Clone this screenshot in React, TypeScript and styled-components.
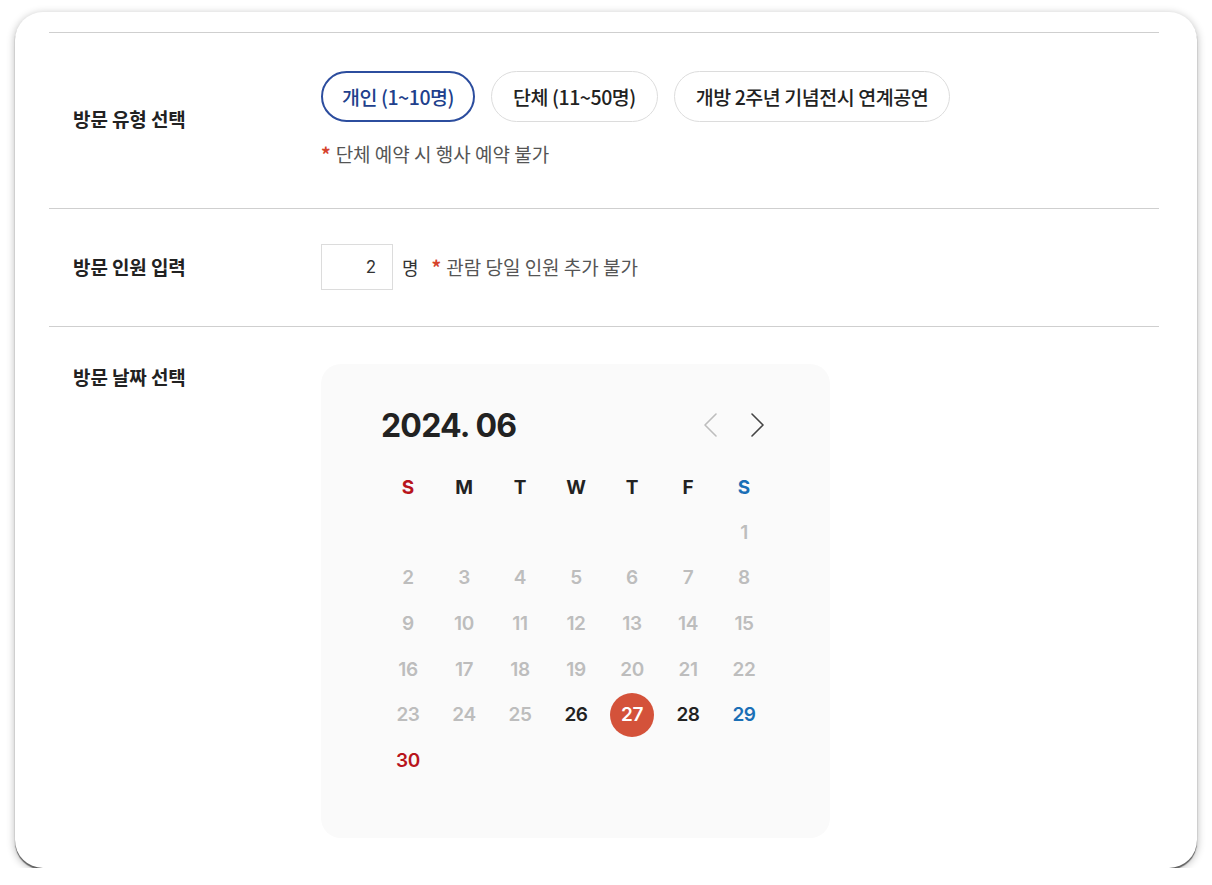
import styled, { createGlobalStyle } from "styled-components";

const GlobalStyle = createGlobalStyle`
  body {
    margin: 0;
    background: #ffffff;
    font-family: "Noto Sans CJK KR", "Noto Sans", sans-serif;
    color: #222;
  }
`;

const Frame = styled.div`
  box-sizing: border-box;
  width: 1182px;
  height: 856px;
  margin: 12px 0 0 15px;
  padding: 20px 38px 0 34px;
  background: #fff;
  border-radius: 28px;
  overflow: hidden;
  box-shadow: 0 2px 1px rgba(0, 0, 0, 0.55), 0 2px 8px rgba(0, 0, 0, 0.3);
`;

const Form = styled.div`
  border-top: 1px solid #cfcfcf;
`;

const Row = styled.div<{ $align?: string; $pad: string; $last?: boolean }>`
  display: flex;
  align-items: ${({ $align }) => $align || "center"};
  padding: ${({ $pad }) => $pad};
  border-bottom: ${({ $last }) => ($last ? "none" : "1px solid #cfcfcf")};
`;

const Label = styled.div<{ $offset?: number }>`
  width: 248px;
  flex-shrink: 0;
  padding-top: ${({ $offset }) => $offset || 0}px;
  font-size: 19px;
  line-height: 24px;
  font-weight: 700;
  letter-spacing: -0.1px;
  color: #222;
`;

const Field = styled.div`
  display: flex;
  flex-direction: column;
`;

const TypeGroup = styled.div`
  display: flex;
  gap: 16px;
`;

const TypeButton = styled.button<{ $active?: boolean }>`
  box-sizing: border-box;
  height: 51px;
  padding: 0 ${({ $active }) => ($active ? 19 : 21)}px;
  border-radius: 26px;
  background: #fff;
  border: ${({ $active }) => ($active ? "2px solid #2c4d9e" : "1px solid #dcdcdc")};
  color: ${({ $active }) => ($active ? "#213f8c" : "#222")};
  font-family: inherit;
  font-size: 19.5px;
  font-weight: 500;
  letter-spacing: -0.45px;
  cursor: pointer;
`;

const Note = styled.p<{ $top?: number }>`
  margin: ${({ $top }) => $top || 0}px 0 0;
  font-size: 19px;
  line-height: 24px;
  color: #555;

  &::before {
    content: "*";
    color: #d6432c;
    font-weight: 700;
    margin-right: 5px;
  }
`;

const CountLine = styled.div`
  display: flex;
  align-items: center;
`;

const CountInput = styled.input`
  box-sizing: border-box;
  width: 72px;
  height: 46px;
  padding: 0 16px;
  border: 1px solid #dcdcdc;
  text-align: right;
  font-family: "Inter", sans-serif;
  font-size: 17px;
  color: #333;
  outline: none;
`;

const Unit = styled.span`
  margin: 0 13px 0 9px;
  font-size: 18px;
  color: #333;
`;

const Calendar = styled.div`
  box-sizing: border-box;
  width: 509px;
  height: 474px;
  padding: 39px 59px 54px;
  background: #fafafa;
  border-radius: 20px;
  font-family: "Inter", sans-serif;
`;

const CalHeader = styled.div`
  display: flex;
  align-items: center;
  justify-content: space-between;
  height: 44px;
  margin-bottom: 18px;
  padding: 0 5px 0 1px;
`;

const MonthTitle = styled.h2`
  margin: 0;
  font-size: 32px;
  font-weight: 700;
  letter-spacing: -0.8px;
  color: #222;
`;

const NavGroup = styled.div`
  display: flex;
  gap: 32px;
`;

const NavButton = styled.button<{ $muted?: boolean }>`
  display: flex;
  padding: 0;
  border: none;
  background: none;
  color: ${({ $muted }) => ($muted ? "#bdbdbd" : "#444")};
  cursor: pointer;
`;

const Grid = styled.div`
  display: grid;
  grid-template-columns: repeat(7, 56px);
  grid-template-rows: 44.6px repeat(6, 45.6px);
`;

const WeekDay = styled.div<{ $color: string }>`
  display: flex;
  align-items: center;
  justify-content: center;
  font-size: 19px;
  font-weight: 700;
  color: ${({ $color }) => $color};
`;

const Day = styled.div<{ $color: string; $selected?: boolean }>`
  display: flex;
  align-items: center;
  justify-content: center;

  span {
    display: flex;
    align-items: center;
    justify-content: center;
    width: 44px;
    height: 44px;
    border-radius: 50%;
    font-size: 19px;
    font-weight: 600;
    letter-spacing: -0.4px;
    color: ${({ $selected, $color }) => ($selected ? "#fff" : $color)};
    background: ${({ $selected }) => ($selected ? "#d4523a" : "transparent")};
  }
`;

const Chevron = ({ dir }: { dir: "left" | "right" }) => (
  <svg width="16" height="24" viewBox="0 0 16 24" fill="none">
    <path
      d={dir === "left" ? "M14 1 L3 12 L14 23" : "M2 1 L13 12 L2 23"}
      stroke="currentColor"
      strokeWidth="1.6"
      strokeLinecap="round"
      strokeLinejoin="round"
    />
  </svg>
);

const RED = "#b8141c";
const BLUE = "#1a6fb6";
const GRAY = "#bdbdbd";
const DARK = "#222";

const weekDays = [
  { t: "S", c: RED },
  { t: "M", c: DARK },
  { t: "T", c: DARK },
  { t: "W", c: DARK },
  { t: "T", c: DARK },
  { t: "F", c: DARK },
  { t: "S", c: BLUE },
];

// June 2024 starts on a Saturday; only 26th onward is bookable
const dayColor = (d: number) => {
  if (d < 26) return GRAY;
  const dow = (d + 5) % 7;
  if (dow === 0) return RED;
  if (dow === 6) return BLUE;
  return DARK;
};

export default function App() {
  const cells: (number | null)[] = [
    ...Array(6).fill(null),
    ...Array.from({ length: 30 }, (_, i) => i + 1),
  ];

  return (
    <>
      <GlobalStyle />
      <Frame>
        <Form>
          <Row $pad="38px 24px 42px">
            <Label>방문 유형 선택</Label>
            <Field>
              <TypeGroup>
                <TypeButton $active>개인 (1~10명)</TypeButton>
                <TypeButton>단체 (11~50명)</TypeButton>
                <TypeButton>개방 2주년 기념전시 연계공연</TypeButton>
              </TypeGroup>
              <Note $top={20}>단체 예약 시 행사 예약 불가</Note>
            </Field>
          </Row>

          <Row $pad="35px 24px 36px">
            <Label>방문 인원 입력</Label>
            <CountLine>
              <CountInput defaultValue="2" />
              <Unit>명</Unit>
              <Note>관람 당일 인원 추가 불가</Note>
            </CountLine>
          </Row>

          <Row $pad="37px 24px 0" $align="flex-start" $last>
            <Label $offset={1}>방문 날짜 선택</Label>
            <Calendar>
              <CalHeader>
                <MonthTitle>2024. 06</MonthTitle>
                <NavGroup>
                  <NavButton $muted aria-label="이전 달">
                    <Chevron dir="left" />
                  </NavButton>
                  <NavButton aria-label="다음 달">
                    <Chevron dir="right" />
                  </NavButton>
                </NavGroup>
              </CalHeader>
              <Grid>
                {weekDays.map((w, i) => (
                  <WeekDay key={i} $color={w.c}>
                    {w.t}
                  </WeekDay>
                ))}
                {cells.map((d, i) =>
                  d === null ? (
                    <div key={i} />
                  ) : (
                    <Day key={i} $color={dayColor(d)} $selected={d === 27}>
                      <span>{d}</span>
                    </Day>
                  )
                )}
              </Grid>
            </Calendar>
          </Row>
        </Form>
      </Frame>
    </>
  );
}
